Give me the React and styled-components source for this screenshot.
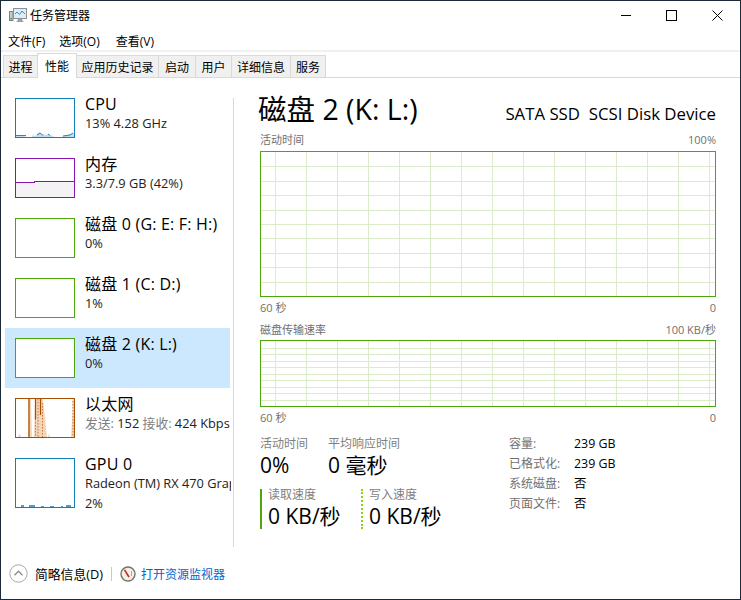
import React from "react";
import styled, { createGlobalStyle } from "styled-components";

const FONT = `"Open Sans", "Noto Sans CJK SC", sans-serif`;

const GlobalStyle = createGlobalStyle`
  html, body { margin: 0; padding: 0; background: #fff; }
  body { font-family: ${FONT}; color: #000; }
`;

const Window = styled.div`
  box-sizing: border-box;
  width: 741px;
  height: 600px;
  border: 1px solid #1b2a38;
  background: #fff;
  display: flex;
  flex-direction: column;
  overflow: hidden;
`;

const TitleBar = styled.div`
  height: 28px;
  display: flex;
  align-items: center;
  padding-left: 8px;
  font-size: 12px;
`;

const TitleText = styled.span`
  margin-left: 3px;
  flex: 1;
`;

const WinButton = styled.div`
  width: 46px;
  height: 28px;
  display: flex;
  align-items: center;
  justify-content: center;
`;

const WinButtons = styled.div`
  display: flex;
`;

const MenuBar = styled.div`
  height: 19px;
  display: flex;
  align-items: center;
  padding: 2px 0 0 7px;
  font-size: 12px;
  border-bottom: 2px solid #f0f0f0;
`;

const MenuItem = styled.span`
  margin-right: ${(p) => p.$gap}px;
`;

const TabBar = styled.div`
  height: 25px;
  display: flex;
  align-items: flex-end;
  padding-left: 2px;
  border-bottom: 1px solid #d9d9d9;
`;

const Tab = styled.div`
  box-sizing: border-box;
  width: ${(p) => p.$width}px;
  height: ${(p) => (p.$active ? 25 : 22)}px;
  margin-bottom: ${(p) => (p.$active ? -1 : 0)}px;
  margin-left: ${(p) => (p.$first ? 0 : -1)}px;
  background: ${(p) => (p.$active ? "#fff" : "#f0f0f0")};
  border: 1px solid #d9d9d9;
  border-bottom: 0;
  font-size: 12px;
  display: flex;
  align-items: center;
  justify-content: center;
  position: relative;
  z-index: ${(p) => (p.$active ? 1 : 0)};
`;

const Body = styled.div`
  flex: 1;
  display: flex;
`;

const Sidebar = styled.div`
  width: 225px;
  margin-left: 4px;
  padding-top: 10px;
  display: flex;
  flex-direction: column;
`;

const SideItem = styled.div`
  box-sizing: border-box;
  height: ${(p) => p.$height || 60}px;
  padding: 10px 0 0 10px;
  display: flex;
  background: ${(p) => (p.$selected ? "#cce8ff" : "transparent")};
`;

const Thumb = styled.div`
  box-sizing: border-box;
  width: 60px;
  height: ${(p) => p.$height || 40}px;
  border: 1px solid ${(p) => p.$color};
  background: #fff;
  flex: none;
  line-height: 0;
`;

const SideText = styled.div`
  margin: -4px -1px 0 10px;
  min-width: 0;
  flex: 1;
  white-space: nowrap;
  overflow: hidden;
`;

const SideName = styled.div`
  font-size: 16px;
  line-height: 20px;
  letter-spacing: 0.2px;
`;

const SideDetail = styled.div`
  font-size: 12.8px;
  line-height: 18px;
  margin-top: ${(p) => p.$top || 0}px;
  color: #222;
`;

const GrayText = styled.span`
  color: #808080;
`;

const Divider = styled.div`
  width: 1px;
  height: 449px;
  margin: 20px 0 0 3px;
  background: #d9d9d9;
`;

const Main = styled.div`
  width: 460px;
  margin-left: 24px;
  display: flex;
  flex-direction: column;
`;

const Header = styled.div`
  height: 36px;
  margin-top: 14px;
  display: flex;
  justify-content: space-between;
`;

const DiskTitle = styled.div`
  font-size: 28.5px;
  line-height: 36px;
  margin-top: -1px;
  white-space: nowrap;
`;

const DiskModel = styled.div`
  font-size: 16.8px;
  line-height: 22px;
  margin: 11px 2px 0 0;
  white-space: pre;
`;

const ChartBlock = styled.div`
  margin-left: 2px;
  width: 456px;
`;

const LabelRow = styled.div`
  height: ${(p) => p.$height}px;
  margin-top: ${(p) => p.$top || 0}px;
  margin-bottom: ${(p) => p.$bottom || 0}px;
  display: flex;
  align-items: center;
  justify-content: space-between;
  font-size: 11px;
  color: #707070;
`;

const ChartFrame = styled.div`
  box-sizing: border-box;
  width: 456px;
  height: ${(p) => p.$height}px;
  border: 1px solid #4da60c;
  line-height: 0;
`;

const Stats = styled.div`
  margin: 8px 0 0 2px;
  display: flex;
`;

const StatsLeft = styled.div`
  width: 249px;
`;

const StatRow = styled.div`
  display: flex;
`;

const Stat = styled.div`
  width: ${(p) => p.$width}px;
`;

const StatLabel = styled.div`
  font-size: 12px;
  line-height: 17px;
  color: #808080;
`;

const SpeedLabel = styled(StatLabel)`
  margin-top: -3px;
`;

const StatValue = styled.div`
  font-size: 21px;
  line-height: 27px;
`;

const SpeedRow = styled.div`
  display: flex;
  margin-top: 10px;
`;

const Speed = styled.div`
  width: ${(p) => p.$width}px;
  height: 40px;
  box-sizing: border-box;
  padding-left: 6px;
  border-left: 2px ${(p) => (p.$dotted ? "dotted #8bd40f" : "solid #4da60c")};
  white-space: nowrap;
`;

const Facts = styled.div`
  display: grid;
  grid-template-columns: 65px auto;
  grid-auto-rows: 20px;
  align-items: center;
  align-self: flex-start;
  margin-top: -2px;
  font-size: 12.4px;
`;

const FactKey = styled.div`
  color: #707070;
  font-size: 12px;
`;

const Footer = styled.div`
  height: 51px;
  display: flex;
  align-items: center;
  padding-left: 8px;
  font-size: 12px;
`;

const FooterLabel = styled.span`
  margin-left: 7px;
  font-size: 12.8px;
`;

const FooterSep = styled.div`
  width: 1px;
  height: 14px;
  margin: 0 8px 0 8px;
  background: #c8c8c8;
`;

const FooterLink = styled.a`
  margin-left: 5px;
  color: #0066cc;
`;

const AppIcon = () => (
  <svg width="18" height="16" viewBox="0 0 18 16">
    <rect x="0.5" y="4.5" width="3.5" height="9" fill="#c4c8cb" stroke="#7f858a" />
    <rect x="1.4" y="11" width="1.6" height="1.6" fill="#5aa02c" />
    <rect x="4.5" y="1.5" width="13" height="10" fill="#dcedf7" stroke="#8a9298" />
    <path d="M6 7l2-2 2.5 2.5L13 4l3 3" fill="none" stroke="#3c8fc4" />
    <path d="M9 12.5h4V14h-4zM7.5 14.5h7" fill="#a8aeb2" stroke="#8a9094" strokeWidth="0.8" />
  </svg>
);

const Minimize = () => (
  <svg width="11" height="11" viewBox="0 0 11 11">
    <path d="M0.5 5.5h10" stroke="#000" shapeRendering="crispEdges" />
  </svg>
);

const Maximize = () => (
  <svg width="11" height="11" viewBox="0 0 11 11">
    <rect x="0.5" y="0.5" width="9.5" height="9.5" fill="none" stroke="#000" shapeRendering="crispEdges" />
  </svg>
);

const CloseIcon = () => (
  <svg width="11" height="11" viewBox="0 0 11 11">
    <path d="M0.5 0.5l10 10M10.5 0.5l-10 10" stroke="#000" />
  </svg>
);

const CollapseIcon = () => (
  <svg width="19" height="19" viewBox="0 0 19 19">
    <circle cx="9.5" cy="9.5" r="8.7" fill="#fff" stroke="#a8a8a8" />
    <path d="M5.5 11.2l4-4 4 4" fill="none" stroke="#8c8c8c" strokeWidth="1.3" />
  </svg>
);

const MonitorIcon = () => (
  <svg width="16" height="16" viewBox="0 0 16 16">
    <circle cx="8" cy="8" r="7" fill="#f3f0ea" stroke="#77736c" strokeWidth="1.4" />
    <path d="M4.5 3.8L9 11" stroke="#c8281e" strokeWidth="1.6" />
    <path d="M11.5 5v5" stroke="#e0a070" strokeWidth="1" />
  </svg>
);

const CpuSpark = () => (
  <svg width="58" height="38" viewBox="0 0 58 38">
    <path
      d="M0 38V36L3 37L8 37L11 38H16L17 36L19 37L21 36L22 34L24 33.5L26 36L28 35L30 36L32 34.5L34 36L36 36.5L38 38H46L47 37L50 36L52 36L54 35L57 33.5L58 35V38Z"
      fill="#c3dcee"
    />
    <path d="M0 36.5H10M21 36L24 34L27 36.5M32 35L34 36.5M47 37L54 36L57 34" fill="none" stroke="#117dbb" strokeWidth="0.9" />
  </svg>
);

const MemoryFill = () => (
  <svg width="58" height="38" viewBox="0 0 58 38">
    <path d="M0 23H18V22H58V38H0Z" fill="#f4f2f4" />
    <path d="M0 23.5H18.5V22.5H58" fill="none" stroke="#8b12ae" shapeRendering="crispEdges" />
  </svg>
);

const EthernetSpark = () => (
  <svg width="58" height="38" viewBox="0 0 58 38">
    <path d="M2 38L3.5 34L5 38ZM12 38V0H15L16 38ZM18 38L19 0H27L31 38ZM32 38L33 34L34 38ZM55 38L56.5 14V0H58V38Z" fill="#f3d6ba" />
    <path d="M13 0V38M19.5 0V20M24.5 0V16" stroke="#a74f01" strokeWidth="1.2" fill="none" />
    <path d="M13.5 20V38M19.5 20V38M22 0V38M26.5 4V38M57 2V38" stroke="#c8763a" strokeWidth="1" strokeDasharray="1.5 1.5" fill="none" />
  </svg>
);

const GpuSpark = () => (
  <svg width="58" height="48" viewBox="0 0 58 48">
    <path
      d="M5 48V46H8V48ZM13 48V46H19V48ZM25 48V47H28V48ZM34 48V47H38V48ZM45 48V47H47V48ZM50 48V46H55V48Z"
      fill="#117dbb"
      opacity="0.75"
    />
  </svg>
);

const GridLines = ({ height, rows }) => {
  const width = 454;
  const xs = [];
  for (let x = 14; x < width; x += 31) xs.push(x);
  const ys = [];
  for (let i = 1; i < rows; i++) ys.push(Math.round((i * height) / rows));
  return (
    <svg width={width} height={height} viewBox={`0 0 ${width} ${height}`} shapeRendering="crispEdges">
      {xs.map((x) => (
        <line key={x} x1={x + 0.5} x2={x + 0.5} y1="0" y2={height} stroke="#dceccb" />
      ))}
      {ys.map((y) => (
        <line key={y} x1="0" x2={width} y1={y + 0.5} y2={y + 0.5} stroke="#dceccb" />
      ))}
    </svg>
  );
};

const tabs = [
  { label: "进程", width: 35 },
  { label: "性能", width: 40, active: true },
  { label: "应用历史记录", width: 83 },
  { label: "启动", width: 38 },
  { label: "用户", width: 37 },
  { label: "详细信息", width: 60 },
  { label: "服务", width: 36 },
];

const facts = [
  ["容量:", "239 GB"],
  ["已格式化:", "239 GB"],
  ["系统磁盘:", "否"],
  ["页面文件:", "否"],
];

export default function App() {
  return (
    <>
      <GlobalStyle />
      <Window>
        <TitleBar>
          <AppIcon />
          <TitleText>任务管理器</TitleText>
          <WinButtons>
            <WinButton><Minimize /></WinButton>
            <WinButton><Maximize /></WinButton>
            <WinButton><CloseIcon /></WinButton>
          </WinButtons>
        </TitleBar>
        <MenuBar>
          <MenuItem $gap={14}>文件(F)</MenuItem>
          <MenuItem $gap={16}>选项(O)</MenuItem>
          <MenuItem $gap={0}>查看(V)</MenuItem>
        </MenuBar>
        <TabBar>
          {tabs.map((t, i) => (
            <Tab key={t.label} $width={t.width} $active={t.active} $first={i === 0}>
              {t.label}
            </Tab>
          ))}
        </TabBar>
        <Body>
          <Sidebar>
            <SideItem>
              <Thumb $color="#117dbb"><CpuSpark /></Thumb>
              <SideText>
                <SideName>CPU</SideName>
                <SideDetail>13% 4.28 GHz</SideDetail>
              </SideText>
            </SideItem>
            <SideItem>
              <Thumb $color="#8b12ae"><MemoryFill /></Thumb>
              <SideText>
                <SideName>内存</SideName>
                <SideDetail>3.3/7.9 GB (42%)</SideDetail>
              </SideText>
            </SideItem>
            <SideItem>
              <Thumb $color="#4da60c" />
              <SideText>
                <SideName>磁盘 0 (G: E: F: H:)</SideName>
                <SideDetail>0%</SideDetail>
              </SideText>
            </SideItem>
            <SideItem>
              <Thumb $color="#4da60c" />
              <SideText>
                <SideName>磁盘 1 (C: D:)</SideName>
                <SideDetail>1%</SideDetail>
              </SideText>
            </SideItem>
            <SideItem $selected>
              <Thumb $color="#4da60c" />
              <SideText>
                <SideName>磁盘 2 (K: L:)</SideName>
                <SideDetail>0%</SideDetail>
              </SideText>
            </SideItem>
            <SideItem>
              <Thumb $color="#a74f01"><EthernetSpark /></Thumb>
              <SideText>
                <SideName>以太网</SideName>
                <SideDetail><GrayText>发送:</GrayText> 152 <GrayText>接收:</GrayText> 424 Kbps</SideDetail>
              </SideText>
            </SideItem>
            <SideItem $height={70}>
              <Thumb $color="#117dbb" $height={50}><GpuSpark /></Thumb>
              <SideText>
                <SideName>GPU 0</SideName>
                <SideDetail>Radeon (TM) RX 470 Graphics</SideDetail>
                <SideDetail $top={2}>2%</SideDetail>
              </SideText>
            </SideItem>
          </Sidebar>
          <Divider />
          <Main>
            <Header>
              <DiskTitle>磁盘 2 (K: L:)</DiskTitle>
              <DiskModel>SATA SSD  SCSI Disk Device</DiskModel>
            </Header>
            <ChartBlock>
              <LabelRow $height={16} $top={3} $bottom={4}>
                <span>活动时间</span>
                <span>100%</span>
              </LabelRow>
              <ChartFrame $height={146}><GridLines height={144} rows={10} /></ChartFrame>
              <LabelRow $height={20}>
                <span>60 秒</span>
                <span>0</span>
              </LabelRow>
              <LabelRow $height={16} $top={4} $bottom={3}>
                <span>磁盘传输速率</span>
                <span>100 KB/秒</span>
              </LabelRow>
              <ChartFrame $height={67}><GridLines height={65} rows={10} /></ChartFrame>
              <LabelRow $height={20}>
                <span>60 秒</span>
                <span>0</span>
              </LabelRow>
            </ChartBlock>
            <Stats>
              <StatsLeft>
                <StatRow>
                  <Stat $width={68}>
                    <StatLabel>活动时间</StatLabel>
                    <StatValue>0%</StatValue>
                  </Stat>
                  <Stat $width={120}>
                    <StatLabel>平均响应时间</StatLabel>
                    <StatValue>0 毫秒</StatValue>
                  </Stat>
                </StatRow>
                <SpeedRow>
                  <Speed $width={101}>
                    <SpeedLabel>读取速度</SpeedLabel>
                    <StatValue>0 KB/秒</StatValue>
                  </Speed>
                  <Speed $width={100} $dotted>
                    <SpeedLabel>写入速度</SpeedLabel>
                    <StatValue>0 KB/秒</StatValue>
                  </Speed>
                </SpeedRow>
              </StatsLeft>
              <Facts>
                {facts.map(([k, v]) => (
                  <React.Fragment key={k}>
                    <FactKey>{k}</FactKey>
                    <div>{v}</div>
                  </React.Fragment>
                ))}
              </Facts>
            </Stats>
          </Main>
        </Body>
        <Footer>
          <CollapseIcon />
          <FooterLabel>简略信息(D)</FooterLabel>
          <FooterSep />
          <MonitorIcon />
          <FooterLink>打开资源监视器</FooterLink>
        </Footer>
      </Window>
    </>
  );
}
